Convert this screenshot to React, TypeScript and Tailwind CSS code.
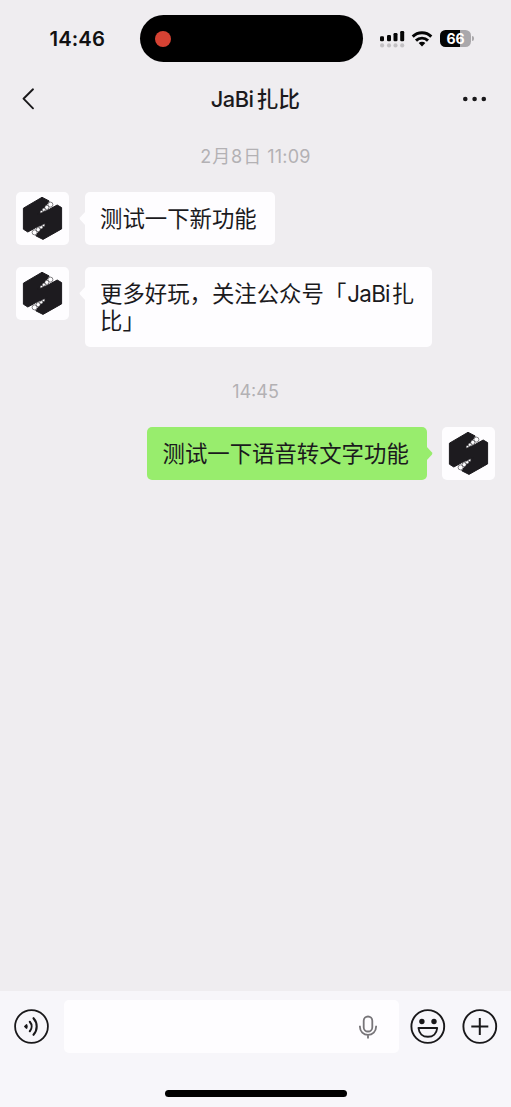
import type { ReactNode } from "react";

function Avatar() {
  return (
    <svg className="h-[53px] w-[53px] shrink-0 rounded-[5px] bg-[#fefdff]" viewBox="0 0 53 53">
      <path
        d="M26 5.3 33.2 9 28.2 15.8 21.8 22.2 31 18.6 41.2 13 45.6 15.6V36.9L27 47.4 19.8 43.8 24.8 37.2 31.2 30.8 22 34.4 11.8 40 7.4 37.2V16.2Z"
        fill="#1d1b1f"
        stroke="#1d1b1f"
        strokeWidth="1"
        strokeLinejoin="round"
      />
      <g fill="#fefdff" stroke="#1d1b1f" strokeWidth=".55">
        <circle cx="34.4" cy="12.6" r="2.5" />
        <circle cx="30.8" cy="15.4" r="2.1" />
        <circle cx="27.8" cy="17.7" r="1.6" />
        <circle cx="25.4" cy="19.6" r="1.2" />
        <circle cx="18.6" cy="40.4" r="2.5" />
        <circle cx="22.2" cy="37.6" r="2.1" />
        <circle cx="25.2" cy="35.3" r="1.6" />
        <circle cx="27.6" cy="33.4" r="1.2" />
      </g>
    </svg>
  );
}

function Bubble({ own = false, children }: { own?: boolean; children: ReactNode }) {
  return (
    <div
      className={
        own
          ? "relative mr-[15.5px] w-[279.5px] rounded-[5px] bg-[#98ed6d] pb-[12.5px] pl-[15.5px] pt-[13px]"
          : "relative ml-4 rounded-[5px] bg-[#fefdff] pb-[12.5px] pl-[15px] pr-[18px] pt-[13px]"
      }
    >
      <svg
        className={own ? "absolute -right-[6px] top-[19px]" : "absolute -left-[6px] top-[19px] rotate-180"}
        width="7"
        height="15"
        viewBox="0 0 7 15"
      >
        <path d="M0 0 5.8 6.2Q7 7.5 5.8 8.8L0 15Z" fill={own ? "#98ed6d" : "#fefdff"} />
      </svg>
      <p className="whitespace-nowrap text-[22.4px] leading-[27.5px] text-[#1b1a1d]">{children}</p>
    </div>
  );
}

function StatusBar() {
  return (
    <div className="flex h-[77px] shrink-0 items-start pt-[15px]">
      <div className="w-[140px] pl-[49.5px] text-[20.3px] font-semibold leading-[47px] tracking-[0.1px] text-[#111]">14:46</div>
      <div className="flex h-[47px] w-[223px] items-center rounded-full bg-black pl-[15px]">
        <div className="h-4 w-4 rounded-full bg-[#d54233]" />
      </div>
      <div className="flex h-[47px] items-center pl-[17px]">
        <svg width="25" height="18" viewBox="0 0 25 18">
          <g fill="#050505">
            <rect x="0" y="6.2" width="4" height="5" rx="1.2" />
            <rect x="7" y="5" width="4" height="6.2" rx="1.2" />
            <rect x="13.5" y="3" width="4" height="8.2" rx="1.2" />
            <rect x="20.2" y="1" width="4" height="10.2" rx="1.2" />
          </g>
          <g fill="#c3c1c4">
            <circle cx="2.1" cy="15.4" r="2.1" />
            <circle cx="9" cy="15.4" r="2.1" />
            <circle cx="15.5" cy="15.4" r="2.1" />
            <circle cx="22.2" cy="15.4" r="2.1" />
          </g>
        </svg>
        <svg className="ml-[6px]" width="22" height="18" viewBox="0 0 22 18">
          <g fill="none" stroke="#050505" strokeWidth="2.9">
            <path d="M1.7 6.6a13.2 13.2 0 0 1 18.6 0" />
            <path d="M5 10.6a8.5 8.5 0 0 1 12 0" />
          </g>
          <path d="M7.7 13a4.7 4.7 0 0 1 6.6 0L11 16.4Z" fill="#050505" />
        </svg>
        <div className="ml-[7px] flex h-[17px] w-[31px] items-center justify-center rounded-[5.5px] bg-[linear-gradient(90deg,#050505_66%,#aaa8ab_66%)] text-[14px] font-bold leading-none text-white">
          66
        </div>
        <div className="ml-[1px] h-[5px] w-[2px] rounded-r-full bg-[#aaa8ab]" />
      </div>
    </div>
  );
}

export default function App() {
  return (
    <div className="flex h-[1107px] w-[511px] flex-col overflow-hidden bg-[#efedf0] font-[Inter,'Noto_Sans_CJK_SC',sans-serif]">
      <StatusBar />
      <header className="flex h-11 shrink-0 items-center justify-between pl-[22px] pr-[23px]">
        <svg width="26" height="24" viewBox="1 0 26 24" fill="none" stroke="#19181a" strokeWidth="1.9" strokeLinecap="round" strokeLinejoin="round">
          <path d="M12 2.3 2.5 11.7 12 21.3" />
        </svg>
        <h1 className="relative left-[0.5px] text-[21.8px] font-medium leading-7 text-[#1b1a1d]">
          <span className="mr-[3px] tracking-[-0.5px]">JaBi</span>扎比
        </h1>
        <svg width="26" height="6" viewBox="0 0 26 6" fill="#19181a">
          <circle cx="3.3" cy="3" r="2.3" />
          <circle cx="12.6" cy="3" r="2.3" />
          <circle cx="21.8" cy="3" r="2.3" />
        </svg>
      </header>

      <main className="flex flex-1 flex-col">
        <time className="mt-[24px] text-center text-[18px] leading-6 tracking-[0.2px] text-[#b3b1b4]">
          2<span className="mx-[0.7px]">月</span>8<span className="mx-[0.7px]">日</span> 11:09
        </time>
        <div className="mt-[22.5px] flex items-start pl-4">
          <Avatar />
          <Bubble>测试一下新功能</Bubble>
        </div>
        <div className="mt-[22px] flex items-start pl-4">
          <Avatar />
          <Bubble>
            更多好玩，关注公众号「<span className="ml-[1px] mr-[2px] tracking-[-0.75px]">JaBi</span>扎
            <br />
            比」
          </Bubble>
        </div>
        <time className="mt-[33px] text-center text-[18px] leading-6 text-[#b3b1b4]">14:45</time>
        <div className="mt-[22.5px] flex items-start justify-end pr-4">
          <Bubble own>测试一下语音转文字功能</Bubble>
          <Avatar />
        </div>
      </main>

      <footer className="flex h-[116px] shrink-0 flex-col items-center bg-[#f7f6fa]">
        <div className="flex w-full items-center pl-[14px] pt-[9px]">
          <svg width="35" height="35" viewBox="0 0 35 35" fill="none" stroke="#19181a" strokeWidth="1.8" strokeLinecap="round">
            <circle cx="17.5" cy="17.5" r="16.4" />
            <path d="M12.6 15.9a3.4 3.4 0 0 1 0 3.2L10.8 17.5Z" fill="#19181a" strokeWidth="1.5" strokeLinejoin="round" />
            <path d="M15.8 12.8a7.2 7.2 0 0 1 0 9.4M19.5 9.2a12.4 12.4 0 0 1 0 16.6" strokeWidth="2.1" />
          </svg>
          <div className="ml-[15px] flex h-[53px] w-[335px] items-center justify-end rounded-[5px] bg-[#fefdff] pr-[21px]">
            <svg width="20" height="24" viewBox="0 0 20 24" fill="none" stroke="#777579" strokeWidth="1.8">
              <rect x="5.7" y="1.5" width="8.6" height="15" rx="4.3" />
              <path d="M1.9 10.7v1.1a8.1 8.1 0 0 0 16.2 0v-1.1M10 20v3.5" />
            </svg>
          </div>
          <svg className="ml-[11px]" width="36" height="35" viewBox="0 0 36 35" fill="none" stroke="#19181a" strokeWidth="1.9">
            <circle cx="17.8" cy="17.5" r="16.4" />
            <circle cx="11.9" cy="12.5" r="2.7" fill="#19181a" stroke="none" />
            <circle cx="24" cy="12.5" r="2.7" fill="#19181a" stroke="none" />
            <path d="M8.5 19H27.2C26.7 24.5 23 27.8 17.9 27.8S9 24.5 8.5 19Z" strokeLinejoin="round" />
          </svg>
          <svg className="ml-4" width="36" height="35" viewBox="0 0 36 35" fill="none" stroke="#19181a" strokeWidth="1.9">
            <circle cx="17.8" cy="17.5" r="16.4" />
            <path d="M17.8 9v17M9.3 17.5h17" strokeWidth="2" />
          </svg>
        </div>
        <div className="mt-[37px] h-[7px] w-[182px] rounded-full bg-black" />
      </footer>
    </div>
  );
}
